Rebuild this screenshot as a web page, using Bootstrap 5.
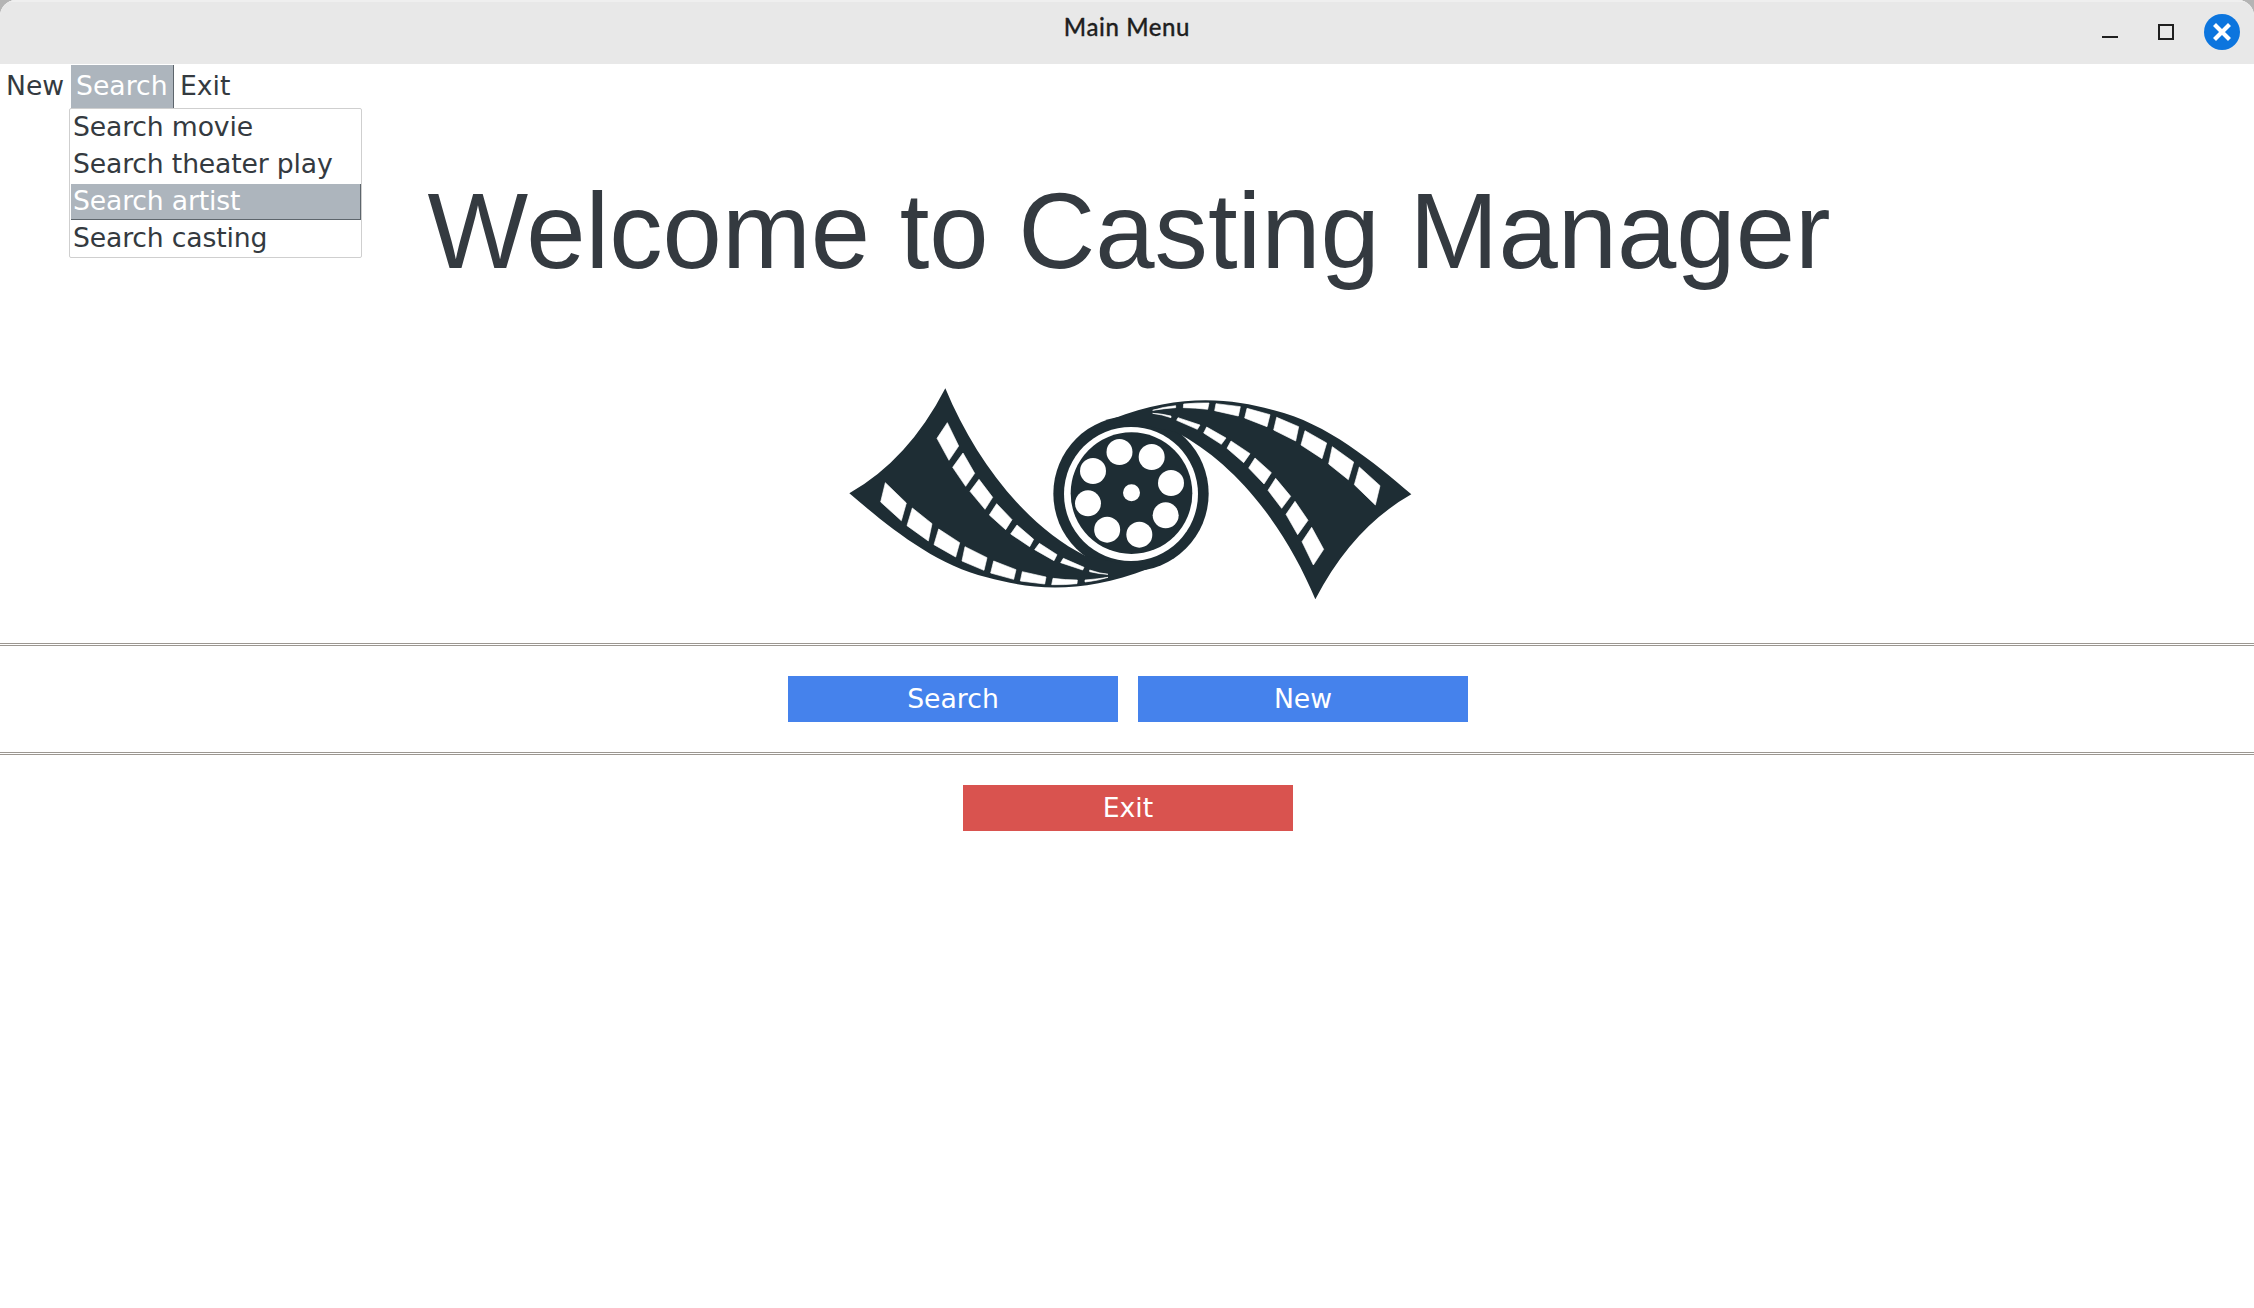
<!DOCTYPE html>
<html lang="en">
<head>
<meta charset="utf-8">
<title>Main Menu</title>
<link href="https://cdn.jsdelivr.net/npm/bootstrap@5.3.0/dist/css/bootstrap.min.css" rel="stylesheet">
<style>
  body { background: #b4b4b4; height: 1308px; overflow: hidden; font-family: "DejaVu Sans", sans-serif; font-size: 26.67px; color: #343a40; }
  .app-window { height: 1308px; background: #fff; border-radius: 16px 16px 0 0; overflow: hidden; }
  .title-bar { height: 64px; background: #e8e8e8; border-top: 2px solid #efefef; color: #1f1f1f; }
  .title-text { font: 500 24px/28px Lato, sans-serif; -webkit-text-stroke: .3px #1f1f1f; margin-top: 11px; letter-spacing: .6px; }
  .window-controls { right: 14px; top: 12px; }
  .menu-strip { height: 45px; padding-top: 1px; }
  .menu-entry { height: 44px; line-height: 42px; color: #343a40; border: 0 solid #5d656c; white-space: nowrap; }
  .menu-new { width: 71px; padding-left: 6px; }
  .menu-search { width: 103px; padding-left: 5px; }
  .menu-exit { padding-left: 6px; }
  .is-active { background: #adb5bd; color: #fff; border-width: 0 1px 1px 0; }
  .menu-popup { left: 69px; top: 108px; width: 293px; height: 150px; border: 1px solid #cfcfcf; border-radius: 2px; background: #fff; padding: 1px 0 0 1px; z-index: 5; letter-spacing: -.17px; }
  .popup-entry { height: 37px; line-height: 34px; padding-left: 2px; border: 0 solid #5d656c; white-space: nowrap; }
  .popup-entry.is-active { height: 36px; margin-bottom: 1px; border-width: 0 1px 1px 0; }
  .welcome { font: 400 106.67px/122px "Liberation Sans", Arial, sans-serif; margin: 61px 0 0; padding-left: 4px; white-space: nowrap; color: #343a40; }
  .logo-row { margin-top: 88px; height: 263px; padding-left: 840px; }
  .rule { height: 3px; border: solid #9c9791; border-width: 1px 0; background: #fff; }
  .action-row { gap: 20px; padding: 30px 0 30px 2px; }
  .action { width: 330px; height: 46px; line-height: 42px; padding: 0; border: 0; border-radius: 0; font-size: 26.67px; color: #fff; }
  .action-blue { background: #4582ec; }
  .action-red { background: #d9534f; }
</style>
</head>
<body>
<div class="app-window position-relative">
  <header class="title-bar position-relative d-flex justify-content-center align-items-start">
    <div class="title-text">Main Menu</div>
    <svg class="window-controls position-absolute" width="140" height="36" viewBox="2100 14 140 36">
      <path d="M2102 37h16" stroke="#1f1f1f" stroke-width="2"/>
      <rect x="2159" y="25" width="14" height="14" fill="none" stroke="#1f1f1f" stroke-width="2"/>
      <circle cx="2222" cy="32" r="18" fill="#0c75de"/>
      <path d="M2216 26l12 12M2228 26l-12 12" stroke="#fff" stroke-width="4.200" stroke-linecap="square"/>
    </svg>
  </header>
  <nav class="menu-strip d-flex">
    <div class="menu-entry menu-new">New</div>
    <div class="menu-entry menu-search is-active">Search</div>
    <div class="menu-entry menu-exit">Exit</div>
  </nav>
  <div class="menu-popup position-absolute">
    <div class="popup-entry">Search movie</div>
    <div class="popup-entry">Search theater play</div>
    <div class="popup-entry is-active">Search artist</div>
    <div class="popup-entry">Search casting</div>
  </div>
  <main>
    <h1 class="welcome text-center">Welcome to Casting Manager</h1>
    <div class="logo-row">
      <svg class="d-block" width="580" height="230" viewBox="0 0 1740 690">
        <defs>
          <g id="strip">
            <path fill="#1e2d34" d="M316 25C405 240 555 435 735 527L925 566C720 645 570 628 440 592C280 553 140 435 28 340Q205 240 316 25Z"/>
            <path fill="#fff" stroke="#fff" stroke-width="2" stroke-linejoin="round" d="M136 308L199 369L184 422L122 366ZM217 384L276 431L265 483L201 437ZM296 447L359 488L347 531L282 494ZM375 500L441 533L432 571L366 543ZM461 543L528 569L521 598L452 579ZM547 575L618 591L614 612L541 603ZM639 595Q676 600 712 600L711 611Q672 615 635 614ZM735 600Q775 597 804 592Q775 602 735 606ZM322 128L356 198L327 241L291 175ZM369 219L404 280L377 319L338 262ZM417 298L458 352L435 388L390 334ZM470 371L516 419L497 449L448 405ZM531 435L581 478L569 500L512 462ZM598 490L651 524L642 542L584 509ZM670 535L732 562L728 570L662 548ZM749 570Q778 580 804 583Q778 582 749 575Z"/>
          </g>
        </defs>
        <circle cx="873" cy="341" r="233" fill="#1e2d34"/>
        <use href="#strip"/>
        <use href="#strip" transform="rotate(180 871 341.500)"/>
        <circle cx="873" cy="342" r="201" fill="#fff"/>
        <circle cx="874.500" cy="339.500" r="182.500" fill="#1e2d34"/>
        <g fill="#fff">
          <circle cx="874.500" cy="338" r="25.500"/>
          <circle cx="838.500" cy="216" r="39"/><circle cx="935" cy="231" r="39"/>
          <circle cx="993" cy="309" r="39"/><circle cx="977" cy="406" r="39"/>
          <circle cx="898" cy="464" r="39"/><circle cx="801.500" cy="449" r="39"/>
          <circle cx="744" cy="370" r="39"/><circle cx="759" cy="273" r="39"/>
        </g>
      </svg>
    </div>
    <div class="rule"></div>
    <div class="action-row d-flex justify-content-center">
      <button class="btn action action-blue">Search</button>
      <button class="btn action action-blue">New</button>
    </div>
    <div class="rule"></div>
    <div class="action-row d-flex justify-content-center">
      <button class="btn action action-red">Exit</button>
    </div>
  </main>
</div>
<script src="https://cdn.jsdelivr.net/npm/bootstrap@5.3.0/dist/js/bootstrap.bundle.min.js"></script>
</body>
</html>
